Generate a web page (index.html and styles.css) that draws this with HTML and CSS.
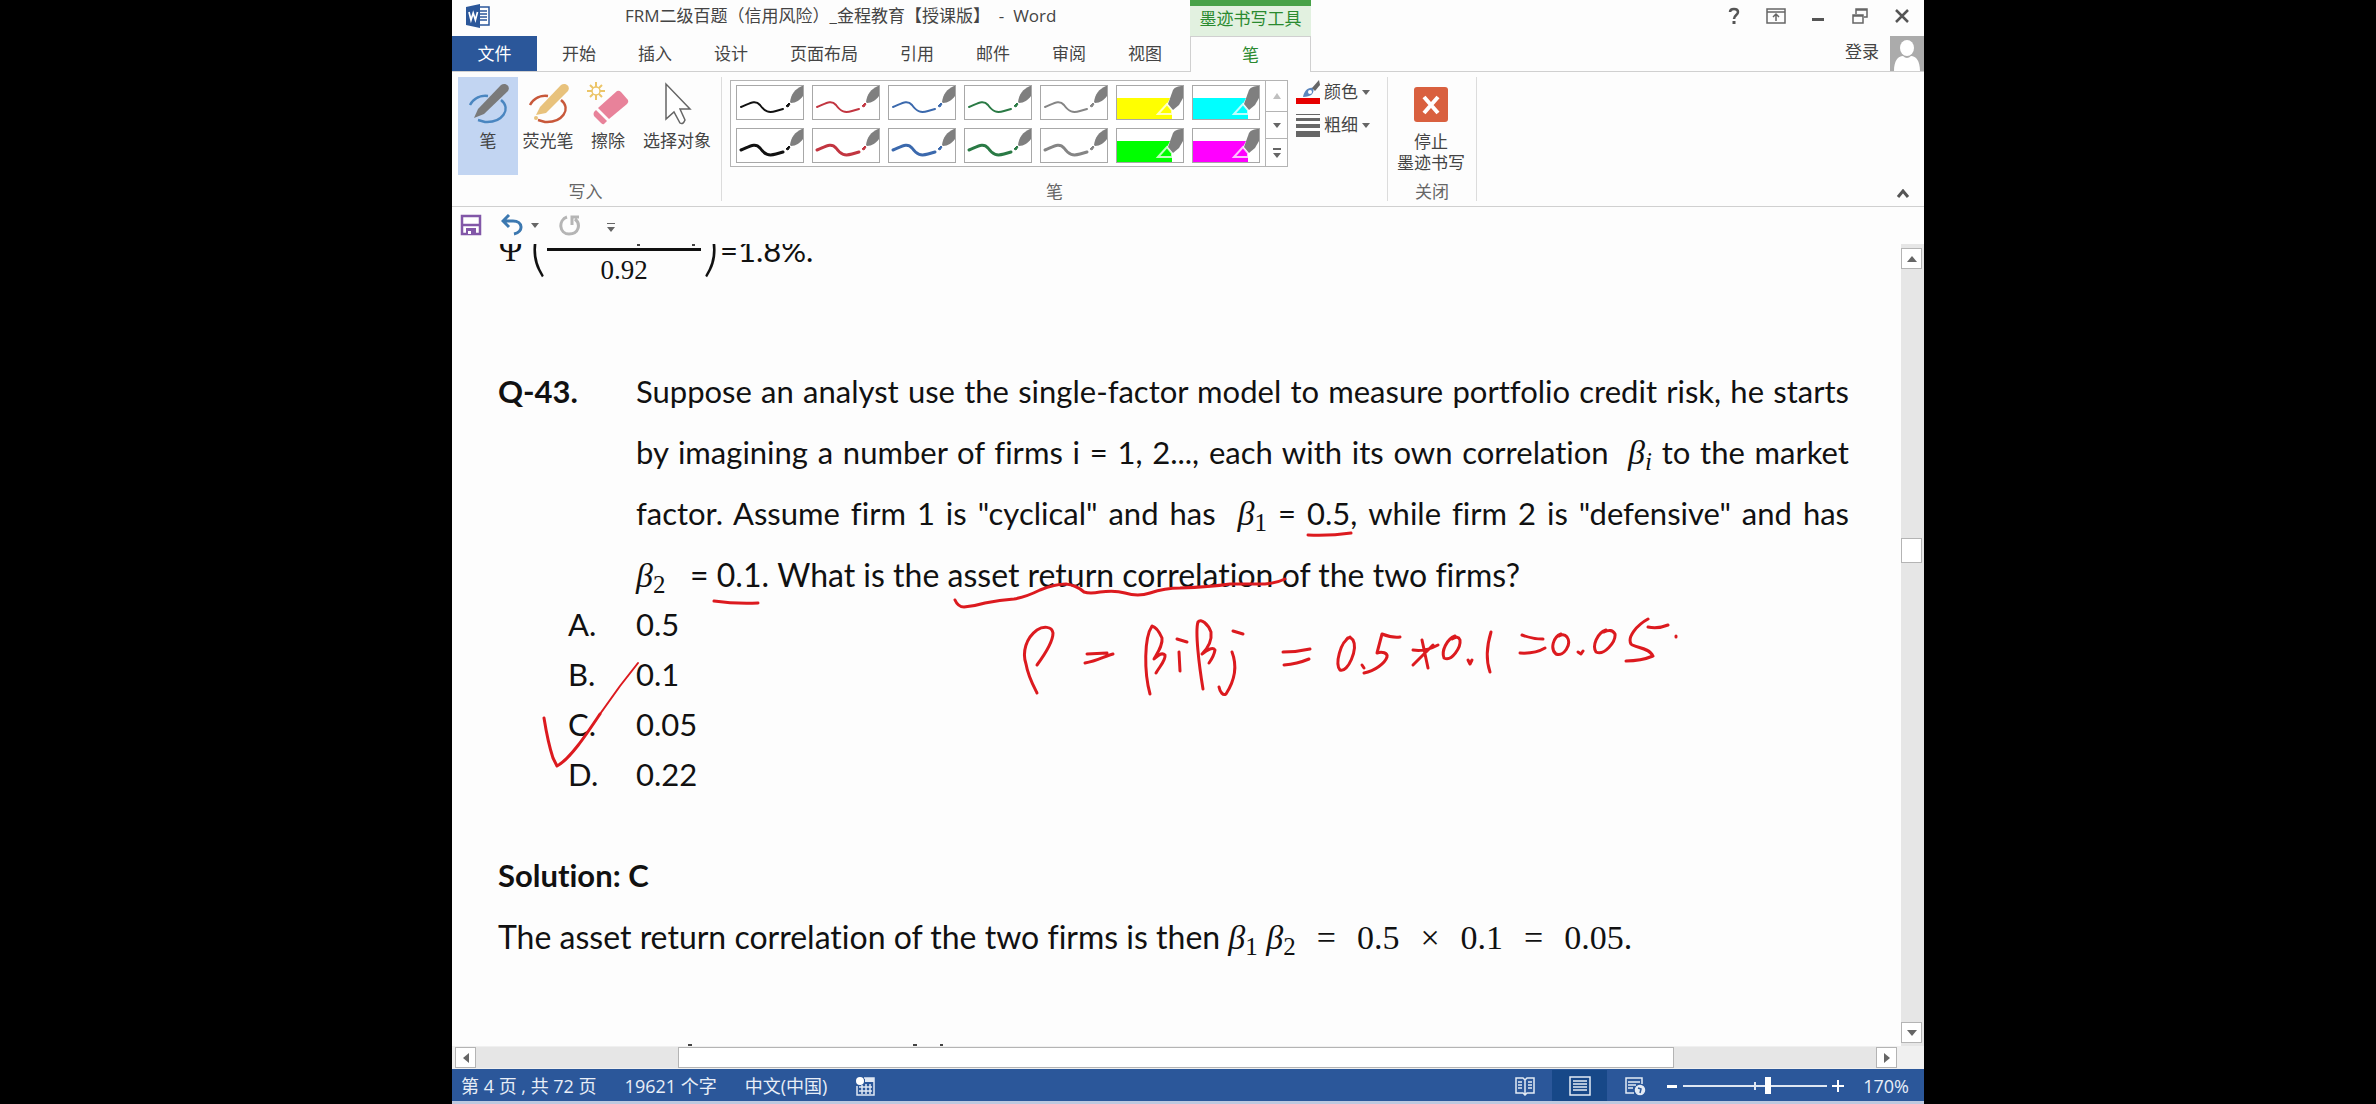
FILE: index.html
```html
<!DOCTYPE html>
<html lang="zh-CN">
<head>
<meta charset="utf-8">
<title>FRM二级百题（信用风险）_金程教育【授课版】 - Word</title>
<link rel="stylesheet" href="styles.css">
</head>
<body>
<svg class="defs" width="0" height="0" aria-hidden="true">
  <defs>
    <symbol id="stroke" viewBox="0 0 66 33">
      <path d="M4 21C12 18 18 13 23 19C28 26 32 27 39 25L46 23" fill="none" stroke="currentColor" stroke-linecap="round"/>
      <path d="M49 20l3-3 1 1-2 3z" fill="currentColor" stroke="currentColor" stroke-width="1"/>
      <path d="M53 16C54 8 58 3 65 0H66V10C63 14 59 17 54 17Z" fill="#7f7f7f" stroke="none"/>
    </symbol>
    <symbol id="marker" viewBox="0 0 66 33">
      <path d="M0 12H53L50 18L55 24V33H0Z" fill="currentColor" stroke="none"/>
      <path d="M41 28L50 18L55 24V28Z" fill="none" stroke="#fff" stroke-opacity=".75" stroke-width="2"/>
      <path d="M51 18L56 4C58 1 61 0 66 0V12L62 19L56 24Z" fill="#7f7f7f" stroke="none"/>
    </symbol>
  </defs>
</svg>
<div class="window">
  <header class="head">
    <div class="titlebar">
      <svg class="word" width="24" height="24" viewBox="0 0 24 24"><path d="M12 3h11v18H12z" fill="#fff" stroke="#2b579a" stroke-width="1.5"/><path d="M14 7h7M14 10h7M14 13h7M14 16h7" stroke="#2b579a" stroke-width="1.5"/><path d="M0 3L14 0V24L0 21Z" fill="#2b579a"/><path d="M3 8L5 16L7.200 9L9.400 16L11.500 8" fill="none" stroke="#fff" stroke-width="1.700"/></svg>
      <span>FRM二级百题（信用风险）_金程教育【授课版】&nbsp; - &nbsp;Word</span>
    </div>
    <div class="context">墨迹书写工具</div>
    <div class="controls">
      <button aria-label="帮助"><svg width="20" height="20" viewBox="0 0 20 20"><path d="M6 6C6 2 14 2 14 6C14 9 10 9 10 13" fill="none" stroke="#555" stroke-width="2.500"/><path d="M8.500 15h3v3h-3z" fill="#555"/></svg></button>
      <button aria-label="功能区显示选项"><svg width="20" height="20" viewBox="0 0 20 20" fill="none" stroke="#666" stroke-width="1.500"><path d="M1 3h18v14H1zM1 6h18M10 15V8M7 11l3-3 3 3"/></svg></button>
      <button aria-label="最小化"><svg width="20" height="20" viewBox="0 0 20 20"><path d="M4 12h12v3H4z" fill="#555"/></svg></button>
      <button aria-label="还原"><svg width="20" height="20" viewBox="0 0 20 20" fill="none" stroke="#666" stroke-width="1.500"><path d="M3 9h10v8H3zM3 10h10M6 8V3h11v8h-3M6 4h11"/></svg></button>
      <button aria-label="关闭"><svg width="20" height="20" viewBox="0 0 20 20"><path d="M4 4L16 16M16 4L4 16" stroke="#555" stroke-width="2.500"/></svg></button>
    </div>
    <nav class="tabs">
      <button class="file">文件</button><button>开始</button><button>插入</button><button>设计</button><button>页面布局</button><button>引用</button><button>邮件</button><button>审阅</button><button>视图</button>
    </nav>
    <button class="pentab">笔</button>
    <div class="account">
      <a href="#">登录</a>
      <svg width="34" height="35" viewBox="0 0 34 35"><path d="M0 0h34v35H0z" fill="#ababab"/><ellipse cx="17" cy="12" rx="7" ry="8" fill="#fff"/><path d="M4 35C4 25 8 20 13 20Q17 24 21 20C26 20 30 25 30 35Z" fill="#fff"/></svg>
    </div>
  </header>

  <section class="ribbon">
    <div class="group write">
      <div class="tools">
        <button class="tool on"><svg width="44" height="44" viewBox="0 0 44 44"><path d="M4 23C8 16 15 13 22 14M35 18C46 27 36 41 19 40L12 38" fill="none" stroke="#4a86c0" stroke-width="2.500"/><path d="M8 36L12 27L35 3C39 0 45 4 42 9L18 32Z" fill="#7a7a7a"/></svg>笔</button>
        <button class="tool"><svg width="44" height="44" viewBox="0 0 44 44"><path d="M4 23C8 16 15 13 22 14M35 18C46 27 36 41 19 40L12 38" fill="none" stroke="#c8583a" stroke-width="2.500"/><path d="M10 33L14 25L35 3C39 0 45 4 42 9L20 31Z" fill="#e8c27c"/><circle cx="10" cy="36" r="2" fill="#e8c27c"/></svg>荧光笔</button>
        <button class="tool"><svg width="44" height="44" viewBox="0 0 44 44"><path d="M10 0v18M1 9h18M4 3l12 12M16 3L4 15" stroke="#ecc568" stroke-width="2"/><circle cx="10" cy="9" r="4" fill="#fff" stroke="#ecc568" stroke-width="1.500"/><path d="M12 26L31 9Q33 8 35 10L42 18Q43 20 41 22L23 37Z" fill="#e8829a"/><path d="M10 28L21 39L18 42Q17 43 15 41L8 34Q7 32 8 30Z" fill="#e8829a"/></svg>擦除</button>
        <button class="tool"><svg width="44" height="44" viewBox="0 0 44 44"><path d="M11 2V37L19 30L25 41Q28 43 30 38L25 27H35Z" fill="#fff" stroke="#666" stroke-width="1.500"/></svg>选择对象</button>
      </div>
      <div class="caption">写入</div>
    </div>
    <div class="group pens">
      <div class="tools">
        <div class="gallery">
          <div class="cells">
            <button class="pen thin c-black" aria-label="黑色细笔"><svg><use href="#stroke"/></svg></button>
            <button class="pen thin c-red" aria-label="红色细笔"><svg><use href="#stroke"/></svg></button>
            <button class="pen thin c-blue" aria-label="蓝色细笔"><svg><use href="#stroke"/></svg></button>
            <button class="pen thin c-green" aria-label="绿色细笔"><svg><use href="#stroke"/></svg></button>
            <button class="pen thin c-gray" aria-label="灰色细笔"><svg><use href="#stroke"/></svg></button>
            <button class="pen c-yellow" aria-label="黄色荧光笔"><svg><use href="#marker"/></svg></button>
            <button class="pen c-cyan" aria-label="青色荧光笔"><svg><use href="#marker"/></svg></button>
            <button class="pen c-black" aria-label="黑色粗笔"><svg><use href="#stroke"/></svg></button>
            <button class="pen c-red" aria-label="红色粗笔"><svg><use href="#stroke"/></svg></button>
            <button class="pen c-blue" aria-label="蓝色粗笔"><svg><use href="#stroke"/></svg></button>
            <button class="pen c-green" aria-label="绿色粗笔"><svg><use href="#stroke"/></svg></button>
            <button class="pen c-gray" aria-label="灰色粗笔"><svg><use href="#stroke"/></svg></button>
            <button class="pen c-lime" aria-label="绿色荧光笔"><svg><use href="#marker"/></svg></button>
            <button class="pen c-magenta" aria-label="洋红荧光笔"><svg><use href="#marker"/></svg></button>
          </div>
          <div class="scrollers">
            <button aria-label="上一行"><svg width="10" height="12" viewBox="0 0 10 12"><path d="M5 3l4 6H1z" fill="#c0c0c0"/></svg></button>
            <button aria-label="下一行"><svg width="10" height="12" viewBox="0 0 10 12"><path d="M5 9L1 4h8z" fill="#666"/></svg></button>
            <button aria-label="其他"><svg width="10" height="12" viewBox="0 0 10 12"><path d="M5 11L1 6h8zM1 1h8v2H1z" fill="#666"/></svg></button>
          </div>
        </div>
        <div class="options">
          <button><svg width="24" height="24" viewBox="0 0 24 24"><path d="M0 18h24v6H0z" fill="#e60000"/><path d="M7 17C8 11 12 7 17 8C19 13 15 17 7 17Z" fill="#5b86bd"/><circle cx="14" cy="12" r="2" fill="#fff"/><path d="M16 8L23 0L24 5L19 11Z" fill="#666"/></svg>颜色<i class="drop"></i></button>
          <button><svg width="24" height="24" viewBox="0 0 24 24" fill="#666"><path d="M0 1h24v1H0zM0 5h24v3H0zM0 11h24v4H0zM0 18h24v6H0z"/></svg>粗细<i class="drop"></i></button>
        </div>
      </div>
      <div class="caption">笔</div>
    </div>
    <div class="group close">
      <button class="tool"><svg width="44" height="44" viewBox="0 0 44 44"><rect x="5" y="3" width="34" height="35" rx="3" fill="#d9603f"/><path d="M15 13L29 29M29 13L15 29" stroke="#fff" stroke-width="4"/></svg>停止<br>墨迹书写</button>
      <div class="caption">关闭</div>
    </div>
    <button class="collapse" aria-label="折叠功能区"><svg width="14" height="10" viewBox="0 0 14 10"><path d="M2 8L7 2L12 8" fill="none" stroke="#555" stroke-width="3"/></svg></button>
  </section>

  <div class="quick">
    <button aria-label="保存"><svg width="22" height="22" viewBox="0 0 22 22"><path d="M2 2h18v18H2z" fill="#fff" stroke="#8257a8" stroke-width="2.500"/><path d="M2 11h18" stroke="#8257a8" stroke-width="2.500"/><path d="M6 14h10v6H6z" fill="#8257a8"/><path d="M8 17h3v3H8z" fill="#fff"/></svg></button>
    <button class="undo" aria-label="撤消"><svg width="22" height="22" viewBox="0 0 22 22"><path d="M8 1L2 7L8 13M2 7H12C22 7 23 18 13 20" fill="none" stroke="#3c78b0" stroke-width="3"/></svg><i class="drop"></i></button>
    <button class="redo" aria-label="重复"><svg width="22" height="22" viewBox="0 0 22 22"><path d="M8 3C-1 6 0 20 10 20C20 20 22 10 16 5M13 11V3H20" fill="none" stroke="#b5b5b5" stroke-width="3"/></svg></button>
    <button class="more" aria-label="自定义"><svg width="10" height="12" viewBox="0 0 10 12"><path d="M5 11L1 6h8zM1 2h8v1H1z" fill="#666"/></svg></button>
  </div>

  <div class="view">
    <main class="page">
      <div class="formula">
        <span class="psi">Ψ</span><span class="paren">(</span><span class="fraction">0.92</span><span class="paren right">)</span><span>=1.8%.</span>
      </div>
      <section class="question">
        <h2>Q-43.</h2>
        <p>
          <span class="line">Suppose an analyst use the single-factor model to measure portfolio credit risk, he starts</span>
          <span class="line">by imagining a number of firms i = 1, 2..., each with its own correlation &nbsp;<var>β<sub>i</sub></var> to the market</span>
          <span class="line">factor. Assume firm 1 is "cyclical" and has &nbsp;<var>β<sub class="num">1</sub></var> = 0.5, while firm 2 is "defensive" and has</span>
          <span class="line last"><var>β<sub class="num">2</sub></var> &nbsp; = 0.1. What is the asset return correlation of the two firms?</span>
        </p>
      </section>
      <ol class="answers">
        <li><span>A.</span>0.5</li>
        <li><span>B.</span>0.1</li>
        <li><span>C.</span>0.05</li>
        <li><span>D.</span>0.22</li>
      </ol>
      <section class="solution">
        <h2>Solution: C</h2>
        <p>The asset return correlation of the two firms is then <span class="math"><var>β<sub class="num">1</sub></var> <var>β<sub class="num">2</sub></var><b>=</b>0.5<b>×</b>0.1<b>=</b>0.05.</span></p>
      </section>
      <svg class="ink" width="1448" height="802" viewBox="452 244 1448 802">
        <g class="specks"><path d="M637 245h3M692 245h3M688 1045h4M913 1045h4M940 1045h3"/></g>
        <path d="M1308 535Q1330 536 1351 533M714 601Q735 604 758 603"/>
        <path d="M955 600Q958 607 964 607Q975 606 985 603Q1000 600 1014 599Q1026 597 1040 590Q1055 584 1066 584Q1076 585 1084 592Q1090 594 1100 592Q1115 590 1125 593Q1138 597 1150 593Q1165 588 1180 588Q1210 587 1230 584L1265 584Q1277 583 1285 579"/>
        <path d="M1037 665C1048 650 1053 640 1053 633C1052 626 1043 626 1037 630C1026 638 1022 652 1026 664C1028 676 1034 687 1037 693M1087 654L1107 653M1085 663C1097 661 1105 656 1113 654"/>
        <path d="M1150 694C1144 672 1144 638 1152 626C1156 627 1159 631 1162 638C1163 645 1158 652 1154 659C1158 655 1162 652 1165 655C1166 660 1160 666 1156 673M1177 639L1187 642M1179 652L1180 671"/>
        <path d="M1203 689C1199 665 1195 631 1198 622C1201 618 1208 624 1211 632C1212 640 1208 648 1202 654C1208 649 1213 647 1215 650Q1214 656 1209 663M1233 631L1243 634M1232 652C1237 665 1235 680 1226 694C1223 696 1220 692 1219 687"/>
        <path d="M1283 652Q1297 652 1310 649M1284 665Q1297 664 1309 659M1350 637C1340 642 1335 664 1340 670C1348 673 1358 649 1353 640Q1349 635 1346 640M1362 665L1364 668M1400 637Q1392 638 1382 634L1377 653C1382 651 1388 653 1387 657C1385 663 1375 671 1364 673"/>
        <path d="M1413 650Q1425 652 1438 645M1422 640L1428 668M1433 645L1413 665M1455 636C1447 639 1441 651 1444 658C1452 662 1461 647 1460 640Q1458 635 1452 639M1468 660L1470 664L1472 660M1491 632Q1484 655 1490 672"/>
        <path d="M1522 635Q1532 639 1543 639M1520 653Q1535 654 1545 648M1561 634C1553 637 1550 649 1556 654C1564 657 1572 644 1567 637Q1564 633 1559 636M1578 652L1581 654L1583 651M1606 630C1597 633 1592 646 1596 652C1604 656 1616 642 1615 634Q1612 628 1604 632M1648 619C1637 625 1627 637 1631 644C1635 648 1649 647 1653 656Q1641 661 1626 661M1648 627Q1658 629 1668 625M1676 636v1"/>
        <path d="M544 718Q548 743 553 758L557 766C570 759 586 735 600 714"/><path class="fine" d="M600 714L620 686L638 663"/>
      </svg>
    </main>
    <div class="vscroll">
      <button aria-label="向上滚动"><svg width="12" height="8" viewBox="0 0 12 8"><path d="M6 1l5 6H1z" fill="#666"/></svg></button>
      <span class="vthumb"></span>
      <button aria-label="向下滚动"><svg width="12" height="8" viewBox="0 0 12 8"><path d="M6 7L1 1h10z" fill="#666"/></svg></button>
    </div>
    <div class="hscroll">
      <button aria-label="向左滚动"><svg width="8" height="12" viewBox="0 0 8 12"><path d="M1 6l6-5v10z" fill="#666"/></svg></button>
      <div class="htrack"><span class="hthumb"></span></div>
      <button aria-label="向右滚动"><svg width="8" height="12" viewBox="0 0 8 12"><path d="M7 6L1 1v10z" fill="#666"/></svg></button>
    </div>
  </div>

  <footer class="status">
    <span>第 4 页 , 共 72 页</span>
    <span>19621 个字</span>
    <span>中文(中国)</span>
    <svg width="20" height="20" viewBox="0 0 20 20"><path d="M9 2h10v17H2v-9" fill="none" stroke="#dfe7f3" stroke-width="1.500"/><path d="M10 2h9v4h-9z" fill="#dfe7f3"/><circle cx="5" cy="5" r="4" fill="#fff"/><path d="M4 11h13M4 15h13M7 9v9M11 8v10M15 8v10" stroke="#dfe7f3" stroke-width="1.500"/></svg>
    <div class="modes">
      <button aria-label="阅读视图"><svg width="22" height="20" viewBox="0 0 22 20" fill="none" stroke="#e4ebf5" stroke-width="1.500"><path d="M2 2h7l2 2 2-2h7v15h-7l-2 2-2-2H2zM11 4v14M4 6h4M4 9h4M4 12h4M14 6h4M14 9h4M14 12h4"/></svg></button>
      <button class="on" aria-label="页面视图"><svg width="22" height="20" viewBox="0 0 22 20" fill="none" stroke="#e4ebf5" stroke-width="1.500"><path d="M1 1h20v18H1zM4 5h14M4 8h14M4 11h14M4 14h14"/></svg></button>
      <button aria-label="Web 版式视图"><svg width="22" height="20" viewBox="0 0 22 20" fill="none" stroke="#e4ebf5" stroke-width="1.500"><path d="M10 17H2V2h16v6M4 6h12M4 9h8M4 12h5"/><circle cx="16" cy="14" r="4.500" fill="#e4ebf5"/><path d="M14 12l3 1-1 4" stroke="#2b579a"/></svg></button>
    </div>
    <div class="zoom">
      <button aria-label="缩小"><svg width="12" height="12" viewBox="0 0 12 12"><path d="M1 5h10v3H1z" fill="#fff"/></svg></button>
      <input type="range" min="0" max="100" value="59" aria-label="缩放">
      <button aria-label="放大"><svg width="12" height="12" viewBox="0 0 12 12"><path d="M0 5h12v2H0zM5 0h2v12H5z" fill="#fff"/></svg></button>
    </div>
    <span class="percent">170%</span>
  </footer>
</div>
</body>
</html>
```
FILE: styles.css
```css
* { box-sizing: border-box; }

body {
  margin: 0;
  background: #000;
  color: #444;
  font: 17px/22px "Open Sans", "Noto Sans CJK SC", sans-serif;
}

button {
  padding: 0;
  border: 0;
  background: none;
  color: inherit;
  font: inherit;
}

svg { display: block; flex: none; }
.defs { position: absolute; }

/* 4:3 window centred on black */
.window {
  display: flex;
  flex-direction: column;
  width: calc(100vh * 4 / 3);
  height: 100vh;
  margin: 0 auto;
  background: #fdfdfd;
}

/* title bar and tabs */
.head {
  display: grid;
  grid-template-columns: 738px 121px 1fr;
  grid-template-rows: 36px 36px;
}
.titlebar { display: flex; align-items: center; gap: 135px; padding: 0 0 4px 14px; white-space: nowrap; }
.context {
  border-top: 6px solid #47a247;
  background: #e2f1e0;
  color: #2a8a2f;
  line-height: 25px;
  text-align: center;
}
.controls { display: flex; justify-content: flex-end; gap: 22px; padding: 6px 12px 0 0; height: 26px; }
.tabs { display: flex; border-bottom: 1px solid #d0d0d0; }
.tabs button { padding: 0 21px; height: 35px; line-height: 32px; }
.tabs .file { width: 85px; margin-right: 4px; background: #2b579a; color: #fff; }
.pentab {
  border: 1px solid #d0d0d0;
  border-bottom: 0;
  color: #2a8a2f;
  line-height: 30px;
}
.account {
  display: flex;
  justify-content: flex-end;
  gap: 11px;
  border-bottom: 1px solid #d0d0d0;
  line-height: 32px;
}
.account a { color: inherit; text-decoration: none; }

/* ribbon */
.ribbon {
  display: flex;
  height: 135px;
  padding: 5px 0 5px 6px;
  border-bottom: 1px solid #d0d0d0;
}
.group {
  display: flex;
  flex-direction: column;
  justify-content: space-between;
  border-right: 1px solid #dcdcdc;
}
.tools { display: flex; }
.caption { color: #666; line-height: 18px; text-align: center; }
.write { width: 264px; }
.write .caption { padding-right: 8px; }
.tool {
  display: flex;
  flex-direction: column;
  align-items: center;
  width: 60px;
  height: 98px;
  padding-top: 5px;
  line-height: 22px;
  white-space: nowrap;
}
.tool svg { margin-bottom: 4px; }
.tool.on { background: #c2d5f2; }
.write .tool:nth-child(4) { width: 78px; }
.pens { width: 666px; }
.pens .tools { gap: 8px; padding: 3px 0 0 8px; }
.gallery { display: flex; height: 87px; border: 1px solid #b4b4b4; background: #fff; }
.cells {
  display: grid;
  grid-template-columns: repeat(7, 68px);
  gap: 8px;
  padding: 4px 5px;
}
.pen { height: 35px; border: 1px solid #a8a8a8; stroke-width: 3px; }
.pen svg { width: 66px; height: 33px; }
.thin { stroke-width: 2px; }
.c-black { color: #111; }
.c-red { color: #c23540; }
.c-blue { color: #3b69ad; }
.c-green { color: #2a7a45; }
.c-gray { color: #858585; }
.c-yellow { color: #ffff00; }
.c-cyan { color: #00ffff; }
.c-lime { color: #00ff00; }
.c-magenta { color: #ff00ff; }
.scrollers { display: grid; grid-template-rows: 30px 27px 1fr; width: 22px; border-left: 1px solid #b4b4b4; }
.scrollers button { display: grid; place-items: center; }
.scrollers button + button { border-top: 1px solid #b4b4b4; }
.options { display: flex; flex-direction: column; gap: 9px; }
.options button { display: flex; align-items: center; gap: 4px; height: 24px; line-height: 22px; }
.drop { border: 4px solid transparent; border-top: 5px solid #666; border-bottom: 0; }
.close { width: 89px; }
.close .tool { display: block; width: 86px; line-height: 21px; }
.close .tool svg { margin: 0 auto 3px; }
.collapse { align-self: flex-end; margin: 0 14px 2px auto; }

/* quick access bar */
.quick { display: flex; align-items: center; height: 37px; padding: 0 0 1px 8px; }
.quick .undo { display: flex; align-items: center; gap: 8px; margin-left: 19px; }
.quick .redo { margin-left: 20px; }
.quick .more { margin: 3px 0 0 25px; }

/* document view */
.view {
  display: grid;
  flex: 1;
  grid-template-columns: 1fr 23px;
  grid-template-rows: minmax(0, 1fr) 23px;
  min-height: 0;
  background: #f0f0f0;
}
.page {
  position: relative;
  overflow: hidden;
  padding: 0 52px 0 46px;
  background: #fdfdfd;
  color: #111;
  font: 31px/61px Lato, sans-serif;
  font-variant-ligatures: none;
}
.page h2, .page p { margin: 0; }
.page h2 { font-size: 31px; }
.formula { display: flex; height: 117px; line-height: 12px; }
.psi, .fraction, .math { font-family: "Liberation Serif", serif; }
.psi { width: 32px; font-size: 34px; }
.paren { width: 17px; font-size: 62px; font-weight: 300; line-height: 2px; }
.right { margin-left: 2px; }
.fraction {
  align-self: flex-start;
  width: 154px;
  margin-top: 4px;
  border-top: 3px solid #111;
  font-size: 27px;
  line-height: 38px;
  text-align: center;
}
.question { display: grid; grid-template-columns: 138px 1fr; }
.line { display: block; white-space: nowrap; text-align-last: justify; }
.line.last { font-size: 32px; text-align-last: left; }
var { font-family: "Liberation Serif", serif; font-size: 34px; line-height: 1px; }
sub { font-size: 25px; line-height: 1px; vertical-align: -6px; }
sub.num { font-style: normal; }
.answers { margin: -6px 0 46px; padding: 0 0 0 70px; list-style: none; line-height: 50px; }
.answers li { display: flex; }
.answers span { width: 68px; }
.solution p { font-size: 32px; }
.math { font-size: 34px; line-height: 1px; }
.math b { margin: 0 21px; font-weight: normal; }
.ink { position: absolute; top: 0; left: 0; fill: none; stroke: #dc1a1f; stroke-width: 3; stroke-linecap: round; stroke-linejoin: round; }
.ink .fine { stroke-width: 2; }
.specks { stroke: #444; stroke-width: 2; stroke-linecap: butt; }

/* scroll bars */
.vscroll {
  display: flex;
  flex-direction: column;
  align-items: flex-start;
  justify-content: space-between;
  padding: 4px 0 3px;
  background: #e6e6e6;
}
.vscroll button, .hscroll button {
  display: grid;
  place-items: center;
  width: 21px;
  height: 21px;
  border: 1px solid #b4b4b4;
  background: #fff;
}
.vthumb { width: 21px; height: 25px; margin-bottom: 191px; border: 1px solid #b4b4b4; background: #fff; }
.hscroll { display: flex; padding: 1px 4px 0 3px; }
.htrack { flex: 1; padding: 0 14%; height: 21px; background: #e6e6e6; }
.hthumb { display: block; height: 21px; border: 1px solid #b4b4b4; background: #fff; }

/* status bar */
.status {
  display: flex;
  align-items: center;
  gap: 28px;
  height: 35px;
  padding: 1px 0 0 9px;
  border-bottom: 3px solid #bcc8df;
  background: #2b579a;
  color: #e8eef7;
  font-size: 18px;
  white-space: nowrap;
}
.modes { display: flex; align-self: stretch; margin-left: auto; }
.modes button { display: grid; place-items: center; width: 55px; }
.modes .on { background: #174888; }
.zoom { display: flex; align-items: center; gap: 5px; margin-left: -24px; }
.zoom input {
  width: 144px;
  height: 20px;
  margin: 0;
  appearance: none;
  background:
    linear-gradient(#dfe7f3, #dfe7f3) center / 2px 8px no-repeat,
    linear-gradient(#dfe7f3, #dfe7f3) center / 100% 2px no-repeat;
}
.zoom input::-webkit-slider-thumb { appearance: none; width: 6px; height: 17px; background: #fff; }
.percent { margin: 0 15px 0 -9px; }
```
